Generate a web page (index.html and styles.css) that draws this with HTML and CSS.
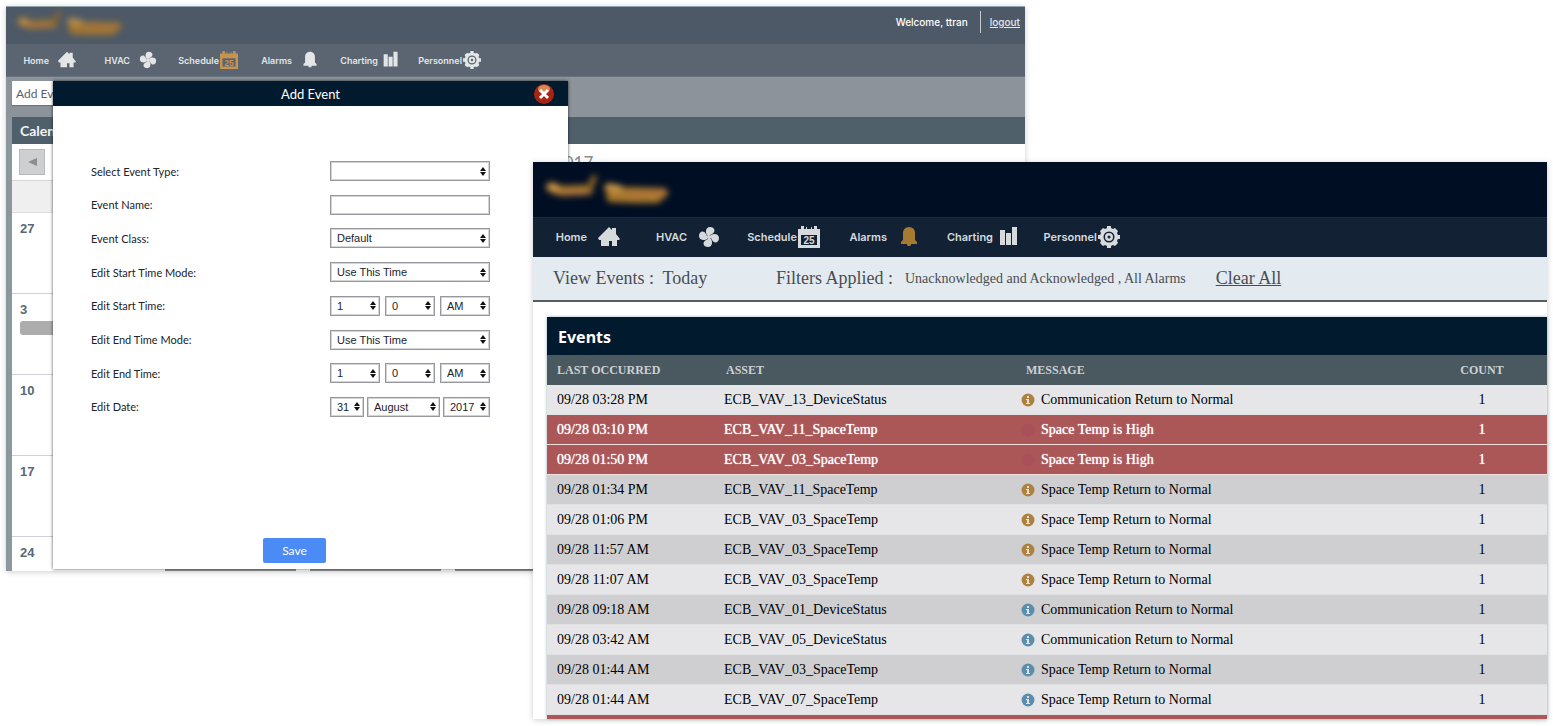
FILE: index.html
```html
<!DOCTYPE html>
<html lang="en">
<head>
<meta charset="utf-8">
<title>Events</title>
<link rel="stylesheet" href="styles.css">
</head>
<body>
<svg class="defs" aria-hidden="true">
  <symbol id="i-home" viewBox="0 0 22 22"><path d="M0 12 11 1l3 3V2h4v6l4 5-1 1h-2v6h-5v-5h-3v5H3v-6H1z"/></symbol>
  <symbol id="i-fan" viewBox="0 0 22 22"><path d="M10 10C7 8 7 1 12 1c5 0 6 5 2 7zM12 10c2-3 9-3 9 2 0 5-5 6-7 2zM12 12c3 2 3 9-2 9-5 0-6-5-2-7zM10 12c-2 3-9 3-9-2 0-5 5-6 7-2z"/><circle cx="11" cy="11" r="2"/></symbol>
  <symbol id="i-cal" viewBox="0 0 22 22"><path fill-rule="evenodd" d="M0 3h3V0h3v3h2V1h1v2h4V1h1v2h2V0h3v3h3v19H0zM3 9v10h16V9z"/><text x="11" y="18" text-anchor="middle" class="cal-day">25</text></symbol>
  <symbol id="i-bell" viewBox="0 0 22 22"><path d="M11 1c4 0 6 3 6 6v7l2 2v2h-6c0 2-1 2-2 2s-2 0-2-2H3v-2l2-2V7c0-3 2-6 6-6z"/></symbol>
  <symbol id="i-bars" viewBox="0 0 22 22"><path d="M2 4h5v15H2zM8 7h5v12H8zM14 1h5v18h-5z"/></symbol>
  <symbol id="i-gear" viewBox="0 0 22 22"><path fill-rule="evenodd" d="M9 0h4v2l2 1 2-1 3 3-1 2 1 2h2v4h-2l-1 2 1 2-3 3-2-1-2 1v2H9v-2l-2-1-2 1-3-3 1-2-1-2H0V9h2l1-2-1-2 3-3 2 1 2-1zM11 5.500a5.500 5.500 0 1 0 0 11 5.500 5.500 0 0 0 0-11zM11 7a4 4 0 1 1 0 8 4 4 0 0 1 0-8zM11 9.500a1.500 1.500 0 1 0 0 3 1.500 1.500 0 0 0 0-3z"/></symbol>
  <symbol id="i-sort" viewBox="0 0 6 9"><path d="M0 4 3 0l3 4zM0 5h6L3 9z"/></symbol>
  <symbol id="i-info" viewBox="0 0 14 14"><circle cx="7" cy="7" r="6.500"/><path class="info-mark" d="M6 3h2v2H6zM5 6h3v4h1v1H5v-1h1V7H5z"/></symbol>
  <symbol id="i-dot" viewBox="0 0 14 14"><circle cx="7" cy="7" r="6.500"/></symbol>
  <symbol id="i-logo" viewBox="0 0 140 40"><g fill="none" stroke-linecap="round" stroke-linejoin="round"><path stroke="#a9792d" stroke-width="10" d="M18 17 28 21 55 20M76 18 90 22 130 23M78 27 100 28 124 28"/><path stroke="#8c6428" stroke-width="6" d="M56 19 61 8"/><path stroke="#d09c50" stroke-width="6" d="M18 17 23 18M76 17 86 18"/><path stroke="#b56a50" stroke-width="2" d="M26 23H54M95 24H130"/></g></symbol>
</svg>

<main class="desktop">
  <section class="window window-schedule" aria-label="Schedule">
    <header class="brand">
      <svg class="logo"><use href="#i-logo"/></svg>
      <div class="session"><span>Welcome, ttran</span><a class="logout" href="#">logout</a></div>
    </header>
    <nav class="menu">
      <a href="#" class="wide">Home<svg><use href="#i-home"/></svg></a>
      <a href="#" class="wide">HVAC<svg><use href="#i-fan"/></svg></a>
      <a href="#">Schedule<svg class="active"><use href="#i-cal"/></svg></a>
      <a href="#" class="wide">Alarms<svg><use href="#i-bell"/></svg></a>
      <a href="#" class="mid">Charting<svg><use href="#i-bars"/></svg></a>
      <a href="#">Personnel<svg><use href="#i-gear"/></svg></a>
    </nav>
    <div class="toolbar"><button class="add-event" type="button">Add Event</button></div>
    <div class="calendar">
      <h2 class="calendar-title">Calendar</h2>
      <div class="calendar-nav">
        <button class="prev" type="button" aria-label="Previous month"><svg viewBox="0 0 9 8"><path d="M0 4 9 0v8z"/></svg></button>
        <span class="month">September 2017</span>
      </div>
      <div class="weekdays"></div>
      <div class="week">27</div>
      <div class="week">3<span class="chip"></span></div>
      <div class="week">10</div>
      <div class="week">17</div>
      <div class="week last">24
        <div class="chips"><span></span><span></span><span></span></div>
      </div>
    </div>

    <div class="modal" role="dialog" aria-label="Add Event">
      <div class="modal-head"><h2>Add Event</h2>
        <button class="close" type="button" aria-label="Close"><svg viewBox="0 0 20 20"><circle class="close-disc" cx="10" cy="10" r="10"/><ellipse class="close-shine" cx="10" cy="5" rx="6" ry="4"/><path class="close-cross" d="m6 6 8 8m0-8-8 8"/></svg></button>
      </div>
      <form class="form">
        <div class="fields">
          <label for="type">Select Event Type:</label>
          <div class="inputs"><span class="select"><select id="type"><option></option></select><svg><use href="#i-sort"/></svg></span></div>
          <label for="name">Event Name:</label>
          <div class="inputs"><input id="name" type="text"></div>
          <label for="class">Event Class:</label>
          <div class="inputs"><span class="select"><select id="class"><option>Default</option></select><svg><use href="#i-sort"/></svg></span></div>
          <label for="smode">Edit Start Time Mode:</label>
          <div class="inputs"><span class="select"><select id="smode"><option>Use This Time</option></select><svg><use href="#i-sort"/></svg></span></div>
          <label for="shour">Edit Start Time:</label>
          <div class="inputs time">
            <span class="select"><select id="shour"><option>1</option></select><svg><use href="#i-sort"/></svg></span>
            <span class="select"><select aria-label="Start minute"><option>0</option></select><svg><use href="#i-sort"/></svg></span>
            <span class="select"><select aria-label="Start AM or PM"><option>AM</option></select><svg><use href="#i-sort"/></svg></span>
          </div>
          <label for="emode">Edit End Time Mode:</label>
          <div class="inputs"><span class="select"><select id="emode"><option>Use This Time</option></select><svg><use href="#i-sort"/></svg></span></div>
          <label for="ehour">Edit End Time:</label>
          <div class="inputs time">
            <span class="select"><select id="ehour"><option>1</option></select><svg><use href="#i-sort"/></svg></span>
            <span class="select"><select aria-label="End minute"><option>0</option></select><svg><use href="#i-sort"/></svg></span>
            <span class="select"><select aria-label="End AM or PM"><option>AM</option></select><svg><use href="#i-sort"/></svg></span>
          </div>
          <label for="day">Edit Date:</label>
          <div class="inputs date">
            <span class="select"><select id="day"><option>31</option></select><svg><use href="#i-sort"/></svg></span>
            <span class="select"><select aria-label="Month"><option>August</option></select><svg><use href="#i-sort"/></svg></span>
            <span class="select"><select aria-label="Year"><option>2017</option></select><svg><use href="#i-sort"/></svg></span>
          </div>
        </div>
        <button class="save" type="button">Save</button>
      </form>
    </div>
  </section>

  <section class="window window-events" aria-label="Alarms">
    <header class="brand"><svg class="logo"><use href="#i-logo"/></svg></header>
    <nav class="menu">
      <a href="#" class="wide">Home<svg><use href="#i-home"/></svg></a>
      <a href="#" class="wide">HVAC<svg><use href="#i-fan"/></svg></a>
      <a href="#">Schedule<svg><use href="#i-cal"/></svg></a>
      <a href="#" class="wide">Alarms<svg class="active"><use href="#i-bell"/></svg></a>
      <a href="#" class="mid">Charting<svg><use href="#i-bars"/></svg></a>
      <a href="#">Personnel<svg><use href="#i-gear"/></svg></a>
    </nav>
    <div class="filters">
      <span class="view">View Events :&nbsp; Today</span>
      <span>Filters Applied :</span>
      <span class="applied">Unacknowledged and Acknowledged , All Alarms</span>
      <a class="clear" href="#">Clear All</a>
    </div>
    <div class="events">
      <h2>Events</h2>
      <table>
        <colgroup><col class="c-time"><col class="c-asset"><col><col class="c-count"></colgroup>
        <thead><tr><th>LAST OCCURRED</th><th>ASSET</th><th>MESSAGE</th><th>COUNT</th></tr></thead>
        <tbody>
          <tr><td>09/28 03:28 PM</td><td>ECB_VAV_13_DeviceStatus</td><td><svg class="info amber"><use href="#i-info"/></svg>Communication Return to Normal</td><td>1</td></tr>
          <tr class="alarm"><td>09/28 03:10 PM</td><td>ECB_VAV_11_SpaceTemp</td><td><svg class="info red"><use href="#i-dot"/></svg>Space Temp is High</td><td>1</td></tr>
          <tr class="alarm"><td>09/28 01:50 PM</td><td>ECB_VAV_03_SpaceTemp</td><td><svg class="info red"><use href="#i-dot"/></svg>Space Temp is High</td><td>1</td></tr>
          <tr><td>09/28 01:34 PM</td><td>ECB_VAV_11_SpaceTemp</td><td><svg class="info amber"><use href="#i-info"/></svg>Space Temp Return to Normal</td><td>1</td></tr>
          <tr><td>09/28 01:06 PM</td><td>ECB_VAV_03_SpaceTemp</td><td><svg class="info amber"><use href="#i-info"/></svg>Space Temp Return to Normal</td><td>1</td></tr>
          <tr><td>09/28 11:57 AM</td><td>ECB_VAV_03_SpaceTemp</td><td><svg class="info amber"><use href="#i-info"/></svg>Space Temp Return to Normal</td><td>1</td></tr>
          <tr><td>09/28 11:07 AM</td><td>ECB_VAV_03_SpaceTemp</td><td><svg class="info amber"><use href="#i-info"/></svg>Space Temp Return to Normal</td><td>1</td></tr>
          <tr><td>09/28 09:18 AM</td><td>ECB_VAV_01_DeviceStatus</td><td><svg class="info blue"><use href="#i-info"/></svg>Communication Return to Normal</td><td>1</td></tr>
          <tr><td>09/28 03:42 AM</td><td>ECB_VAV_05_DeviceStatus</td><td><svg class="info blue"><use href="#i-info"/></svg>Communication Return to Normal</td><td>1</td></tr>
          <tr><td>09/28 01:44 AM</td><td>ECB_VAV_03_SpaceTemp</td><td><svg class="info blue"><use href="#i-info"/></svg>Space Temp Return to Normal</td><td>1</td></tr>
          <tr><td>09/28 01:44 AM</td><td>ECB_VAV_07_SpaceTemp</td><td><svg class="info blue"><use href="#i-info"/></svg>Space Temp Return to Normal</td><td>1</td></tr>
        </tbody>
      </table>
      <div class="next-alarm"></div>
    </div>
  </section>
</main>
</body>
</html>
```
FILE: styles.css
```css
* { box-sizing: border-box; }
body { margin: 0; background: #fff; font-family: Lato, sans-serif; }
h2 { margin: 0; }
button { padding: 0; border: 0; font: inherit; cursor: pointer; }
.defs { display: none; }
.cal-day { font: bold 10px "Liberation Sans", sans-serif; }

.desktop { position: relative; min-height: 100vh; overflow: hidden; }
.window { position: absolute; background: #fff; box-shadow: 0 1px 6px rgba(0, 0, 0, .2); }
.window-schedule { left: 6px; right: 528px; top: 6px; }
.window-events { left: 533px; right: 6px; top: 162px; }

.brand { display: flex; justify-content: space-between; }
.logo { filter: blur(3px); }

.menu { display: flex; }
.menu a { display: flex; align-items: center; justify-content: flex-end; gap: 1px; text-decoration: none; font-family: Inter, sans-serif; font-weight: 600; white-space: nowrap; }
.menu svg { flex: none; fill: currentColor; }
.menu .active { color: #a67a30; }

/* Schedule window */
.window-schedule .brand { height: 38px; background: #4d5966; border-top: 1px solid #8fa5ae; }
.window-schedule .logo { width: 120px; height: 34px; opacity: .9; }
.session { display: flex; align-items: flex-start; padding: 4px 5px 0 0; font: 500 10px/22px Inter, sans-serif; color: #fff; }
.logout { margin-left: 12px; padding-left: 9px; border-left: 1px solid #c5cace; color: #e4e7e9; }
.window-schedule .menu { height: 33px; background: #5a6571; border-bottom: 1px solid #68737d; }
.window-schedule .menu a { width: 81px; font-size: 9px; color: #e3e5e7; }
.window-schedule .menu a:first-child { width: 70px; }
.window-schedule .menu svg { width: 18px; height: 18px; }
.window-schedule .menu .wide { gap: 9px; }
.window-schedule .menu .mid { gap: 4px; }
.window-schedule .menu .active { color: #c8924f; }
.toolbar { height: 40px; padding: 4px 6px; background: #8c939a; }
.add-event { width: 90px; height: 24px; padding-left: 4px; background: #fff; color: #59616b; font-size: 12px; text-align: left; box-shadow: 0 1px 1px #6b737a; }
.calendar { border-left: 6px solid #8c969d; background: #fff; }
.calendar-title { height: 27px; padding-left: 8px; background: #4f606a; color: #f2f4f5; font-size: 14px; line-height: 28px; }
.calendar-nav { display: flex; align-items: center; height: 37px; padding-left: 7px; border-bottom: 1px solid #d3d6d9; }
.prev { display: grid; place-items: center; width: 26px; height: 26px; background: #cecfd0; border: 1px solid #b8babc; }
.prev svg { width: 9px; height: 8px; fill: #8b8d8f; }
.month { flex: 1; padding-right: 8px; text-align: center; font-size: 17px; color: #888d92; }
.weekdays { height: 32px; background: #efefef; border-bottom: 1px solid #dcdee0; }
.week { height: 81px; padding: 8px; border-bottom: 1px solid #cfd2d8; color: #59677a; font: bold 13px/16px "Liberation Sans", sans-serif; }
.week .chip { display: block; width: 90px; height: 14px; margin-top: 3px; border-radius: 3px; background: #adadad; }
.week.last { height: 34px; padding-bottom: 0; border: 0; overflow: hidden; }
.chips { display: flex; gap: 14px; margin-top: 6px; padding-left: 145px; }
.chips span { width: 131px; height: 14px; background: #8e9396; }

.modal { position: absolute; left: 47px; top: 75px; width: 515px; background: #fff; box-shadow: 0 0 3px rgba(0, 0, 0, .7); }
.modal-head { display: grid; grid-template-columns: 48px 1fr 48px; align-items: center; height: 25px; background: #021a2d; color: #fff; }
.modal-head h2 { grid-column: 2; text-align: center; font-size: 13px; font-weight: 400; }
.close { justify-self: center; display: block; width: 20px; height: 20px; background: none; }
.close svg { display: block; width: 20px; height: 20px; }
.close-disc { fill: #a92413; }
.close-shine { fill: #d38a55; }
.close-cross { fill: none; stroke: #fff; stroke-width: 3; }
.form { display: flex; flex-direction: column; padding: 55px 38px 6px; }
.fields { display: grid; grid-template-columns: 239px 160px; grid-auto-rows: 20px; align-content: space-between; align-items: center; height: 256px; font-size: 11px; color: #20232a; }
.inputs { display: flex; gap: 5px; height: 20px; }
.inputs.date { gap: 3px; }
.inputs input { width: 100%; height: 20px; border: 1px solid #96989d; outline: 1px solid #d3d4d6; outline-offset: -2px; }
.select { display: grid; flex: 1; align-items: center; min-width: 0; }
.select select, .select svg { grid-area: 1 / 1; }
.select select { appearance: none; width: 100%; height: 20px; padding: 0 0 0 6px; border: 1px solid #96989d; border-radius: 0; outline: 1px solid #d3d4d6; outline-offset: -2px; background: #fff; color: #20232a; font: 11px "Liberation Sans", sans-serif; }
.select svg { justify-self: end; width: 6px; height: 9px; margin-right: 4px; fill: #111; pointer-events: none; }
.date .select:nth-child(1) { flex: 34; }
.date .select:nth-child(2) { flex: 73; }
.date .select:nth-child(3) { flex: 47; }
.save { width: 63px; height: 25px; margin: 121px 0 0 172px; border-radius: 2px; background: #4a8bf5; color: #fff; font-size: 12px; }

/* Events window */
.window-events .brand { height: 55px; background: #000e23; }
.window-events .logo { width: 140px; height: 40px; margin-top: 8px; }
.window-events .menu { height: 40px; padding-bottom: 1px; background: #122234; border-top: 1px solid #1c2d3b; }
.window-events .menu a { width: 100px; font-size: 11px; color: #d6dadd; }
.window-events .menu a:first-child { width: 87px; }
.window-events .menu svg { width: 22px; height: 22px; }
.window-events .menu .wide { gap: 11px; }
.window-events .menu .mid { gap: 5px; }
.filters { display: flex; align-items: center; height: 45px; padding-left: 20px; border-bottom: 2px solid #555c62; background: #e3ebf1; color: #4a4d50; font: 18px "Liberation Serif", serif; white-space: nowrap; }
.view { width: 223px; }
.applied { margin: 0 30px 0 12px; font-size: 14px; }
.clear { color: inherit; }
.events { margin: 15px 0 0 14px; box-shadow: 0 0 3px #9fb0ba; }
.events h2 { height: 38px; padding-left: 11px; background: #021a2d; color: #fff; font: bold 16px/40px "Noto Sans", sans-serif; }
table { width: 100%; table-layout: fixed; border-spacing: 0; font: 14px "Liberation Serif", serif; color: #000; }
.c-time { width: 167px; }
.c-asset { width: 297px; }
.c-count { width: 130px; }
th, td { height: 30px; padding: 0 10px; text-align: left; white-space: nowrap; }
th { padding-left: 12px; background: #4a5860; color: #cdd1d4; font-size: 12px; }
th:first-child { padding-left: 10px; }
th:nth-child(3) { padding-left: 15px; }
th:last-child, td:last-child { padding: 0; text-align: center; }
td { border-bottom: 1px solid #dfe1e3; }
tbody tr { background: #e6e6e9; }
tbody tr:nth-child(even) { background: #cfcfd2; }
tbody tr.alarm { background: #ab5757; color: #fff; text-shadow: 0 0 1px #fff; }
.alarm td { border-color: #efdfdf; }
.info { width: 14px; height: 14px; margin-right: 6px; vertical-align: -3px; }
.info-mark { fill: #e6e0d4; }
.amber { fill: #ad8140; }
.blue { fill: #5b8eae; }
.red { fill: #a9505a; }
.next-alarm { height: 4px; background: #ab5757; }
```
